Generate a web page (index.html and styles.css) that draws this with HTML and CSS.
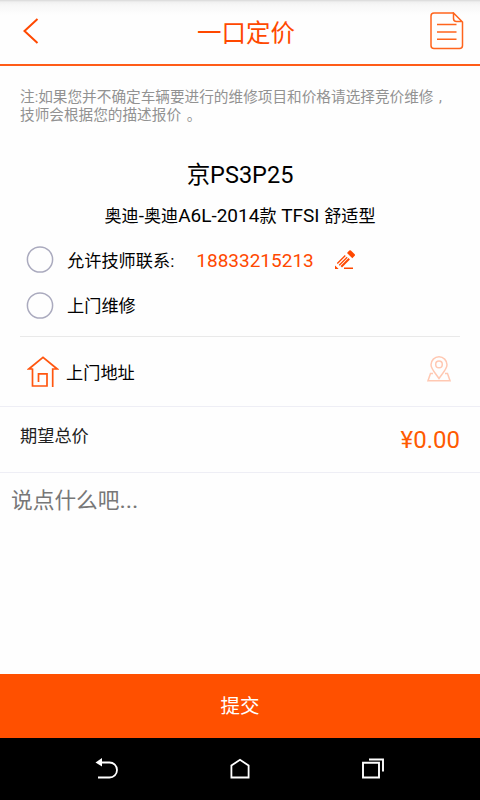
FILE: index.html
```html
<!DOCTYPE html>
<html lang="zh-CN">
<head>
<meta charset="utf-8">
<meta name="viewport" content="width=device-width">
<title>一口定价</title>
<link rel="stylesheet" href="styles.css">
</head>
<body>
<header class="topbar">
  <svg class="back" viewBox="0 0 18 28" fill="none" stroke="#ff4800" stroke-width="2"><path d="M15.5 2 L2.5 14 L15.5 26"/></svg>
  <h1 class="title">一口定价</h1>
  <svg class="doc" viewBox="0 0 34 38" fill="none" stroke="#ff641c" stroke-width="1.5"><path d="M23.500 1H4Q1 1 1 4V33.500Q1 36.500 4 36.500H29.500Q32.500 36.500 32.500 33.500V10L23.500 1V6.500Q23.500 9.500 26.500 9.500H32"/><path d="M7 12.500H26.500M7 20H26.500M7 27.300H26.500"/></svg>
</header>
<main class="content">
  <p class="note">注:如果您并不确定车辆要进行的维修项目和价格请选择竞价维修 ,<br>技师会根据您的描述报价 。</p>
  <div class="plate">京PS3P25</div>
  <div class="model">奥迪<span class="latin">-</span>奥迪<span class="latin">A6L-2014</span>款<span class="latin"> TFSI </span>舒适型</div>
  <div class="options">
    <div class="option">
      <svg class="radio" viewBox="0 0 28 28" fill="none" stroke="#aaaabe" stroke-width="1.500"><circle cx="14" cy="13.500" r="12.600"/></svg>
      <span class="label">允许技师联系:</span>
      <span class="phone">18833215213</span>
      <svg class="edit" viewBox="0 0 20 20"><path fill="#ff4800" d="M12 3 L14.300 .5 Q15.200 -.2 15.900 .5 L19.700 4.200 Q20.300 4.900 19.700 5.700 L17.300 8.200Z M0 15.500 L3.700 19H0Z M9 17.500H18V19H9Z"/><path fill="none" stroke="#ff4800" stroke-width="1.300" d="M2.300 13.500 L10.300 5.500 M4.200 15.200 L12.200 7.200"/><path fill="none" stroke="#ff4800" stroke-width="2" d="M6.300 16.700 L14.200 8.800"/></svg>
    </div>
    <div class="option">
      <svg class="radio" viewBox="0 0 28 28" fill="none" stroke="#aaaabe" stroke-width="1.500"><circle cx="14" cy="13.500" r="12.600"/></svg>
      <span class="label">上门维修</span>
    </div>
  </div>
  <div class="row address">
    <svg class="house" viewBox="0 0 32 32" fill="none" stroke="#ff560f" stroke-width="1.700"><path d="M5.500 13H1.800L16 1.400L30.200 13H25.700V31"/><path d="M5.500 12.500V30H20V17.800H11.500V26"/></svg>
    <span class="label">上门地址</span>
    <svg class="pin" viewBox="0 0 24 26" fill="none" stroke="#ffc8b2" stroke-width="1.500"><path d="M12 22.500C9 18 4 13 4 8.800A8 8 0 0 1 20 8.800C20 13 15 18 12 22.500Z"/><circle cx="12" cy="8.400" r="3.300"/><path d="M6 17.500H3.500L1 24.700H23L20.500 17.500H18"/></svg>
  </div>
  <div class="row total">
    <span class="total-label">期望总价</span>
    <span class="price">¥0.00</span>
  </div>
  <div class="comment">说点什么吧<span class="dots">...</span></div>
</main>
<div class="submit">提交</div>
<nav class="navbar">
  <svg class="nav-icon" viewBox="0 0 24 24"><path fill="#fff" d="M.5 5.500 L7 1V9.500Z"/><path fill="none" stroke="#fff" stroke-width="1.800" d="M6 5.500H14.500A7.500 7.500 0 0 1 14.500 20.500H3"/></svg>
  <svg class="nav-icon" viewBox="0 0 24 24" fill="none" stroke="#fff" stroke-width="1.800"><path d="M3.400 20.500V8.500L12 2.800L20.600 8.500V20.500Z"/></svg>
  <svg class="nav-icon" viewBox="0 0 24 24" fill="none" stroke="#fff" stroke-width="1.900"><path d="M2 5.800H18V20.500H2ZM8 2.500H22V14.500"/></svg>
</nav>
</body>
</html>
```
FILE: styles.css
```css
* {
  box-sizing: border-box;
}

body {
  margin: 0;
  width: 480px;
  height: 800px;
  display: flex;
  flex-direction: column;
  overflow: hidden;
  background: #fefefe;
  color: #000;
  font-family: Roboto, "Noto Sans CJK SC", sans-serif;
}

svg {
  display: block;
  flex: none;
}

.topbar {
  height: 66px;
  padding: 0 16px 2px 22px;
  display: grid;
  grid-template-columns: 34px 1fr 34px;
  align-items: center;
  border-bottom: 2px solid #ff5c18;
  background: linear-gradient(#d8d8d8 0, #f0f0f0 2px, #f7f7f7 5px, #fefefe 15px);
}

.back {
  width: 18px;
  height: 28px;
}

.title {
  margin: 0;
  padding: 6px 0 0 6px;
  text-align: center;
  font-size: 24.5px;
  font-weight: 400;
  line-height: 36px;
  color: #ff4800;
}

.doc {
  width: 34px;
  height: 38px;
}

.content {
  flex: 1;
}

.note {
  margin: 0;
  padding: 22px 0 0 20px;
  font-size: 14.65px;
  line-height: 18px;
  word-spacing: 2px;
  white-space: nowrap;
  color: #929292;
}

.plate {
  margin-top: 33px;
  text-align: center;
  font-size: 23.5px;
  line-height: 36px;
}

.model {
  margin-top: 8px;
  text-align: center;
  font-size: 17.1px;
  line-height: 30px;
}

.latin {
  font-size: 19px;
}

.options {
  margin: 0 20px;
  padding: 7px 6px 0;
  height: 106px;
  border-bottom: 1px solid #e9e9e9;
}

.option {
  height: 45.5px;
  display: flex;
  align-items: center;
}

.radio {
  width: 28px;
  height: 28px;
  margin: 0 13px 1px 0;
}

.label {
  font-size: 17.2px;
  line-height: 26px;
}

.phone {
  margin-left: 22px;
  font-size: 19px;
  color: #ff4800;
}

.edit {
  width: 20px;
  height: 20px;
  margin: 0 0 2px 21px;
}

.row {
  display: flex;
  align-items: center;
  border-bottom: 1px solid #eeeef5;
}

.address {
  height: 70px;
  padding: 2px 29px 0 27px;
}

.house {
  width: 32px;
  height: 32px;
  margin: 0 7px 1px 0;
}

.pin {
  width: 24px;
  height: 26px;
  margin: 0 0 7px auto;
}

.total {
  height: 66px;
  padding: 1px 20px 0;
  justify-content: space-between;
}

.total-label {
  padding-bottom: 11px;
  font-size: 17.2px;
  color: #222;
}

.price {
  font-size: 24px;
  color: #ff5a00;
}

.comment {
  padding: 10px 11px;
  font-size: 21.7px;
  line-height: 34px;
  color: #777;
}

.dots {
  font-size: 24px;
}

.submit {
  height: 64px;
  padding-top: 1px;
  text-align: center;
  font-size: 19.5px;
  line-height: 64px;
  color: #fff;
  background: #ff5000;
}

.navbar {
  height: 62px;
  padding: 0 95px;
  display: flex;
  align-items: center;
  justify-content: space-between;
  background: #000;
}

.nav-icon {
  width: 24px;
  height: 24px;
}
```
